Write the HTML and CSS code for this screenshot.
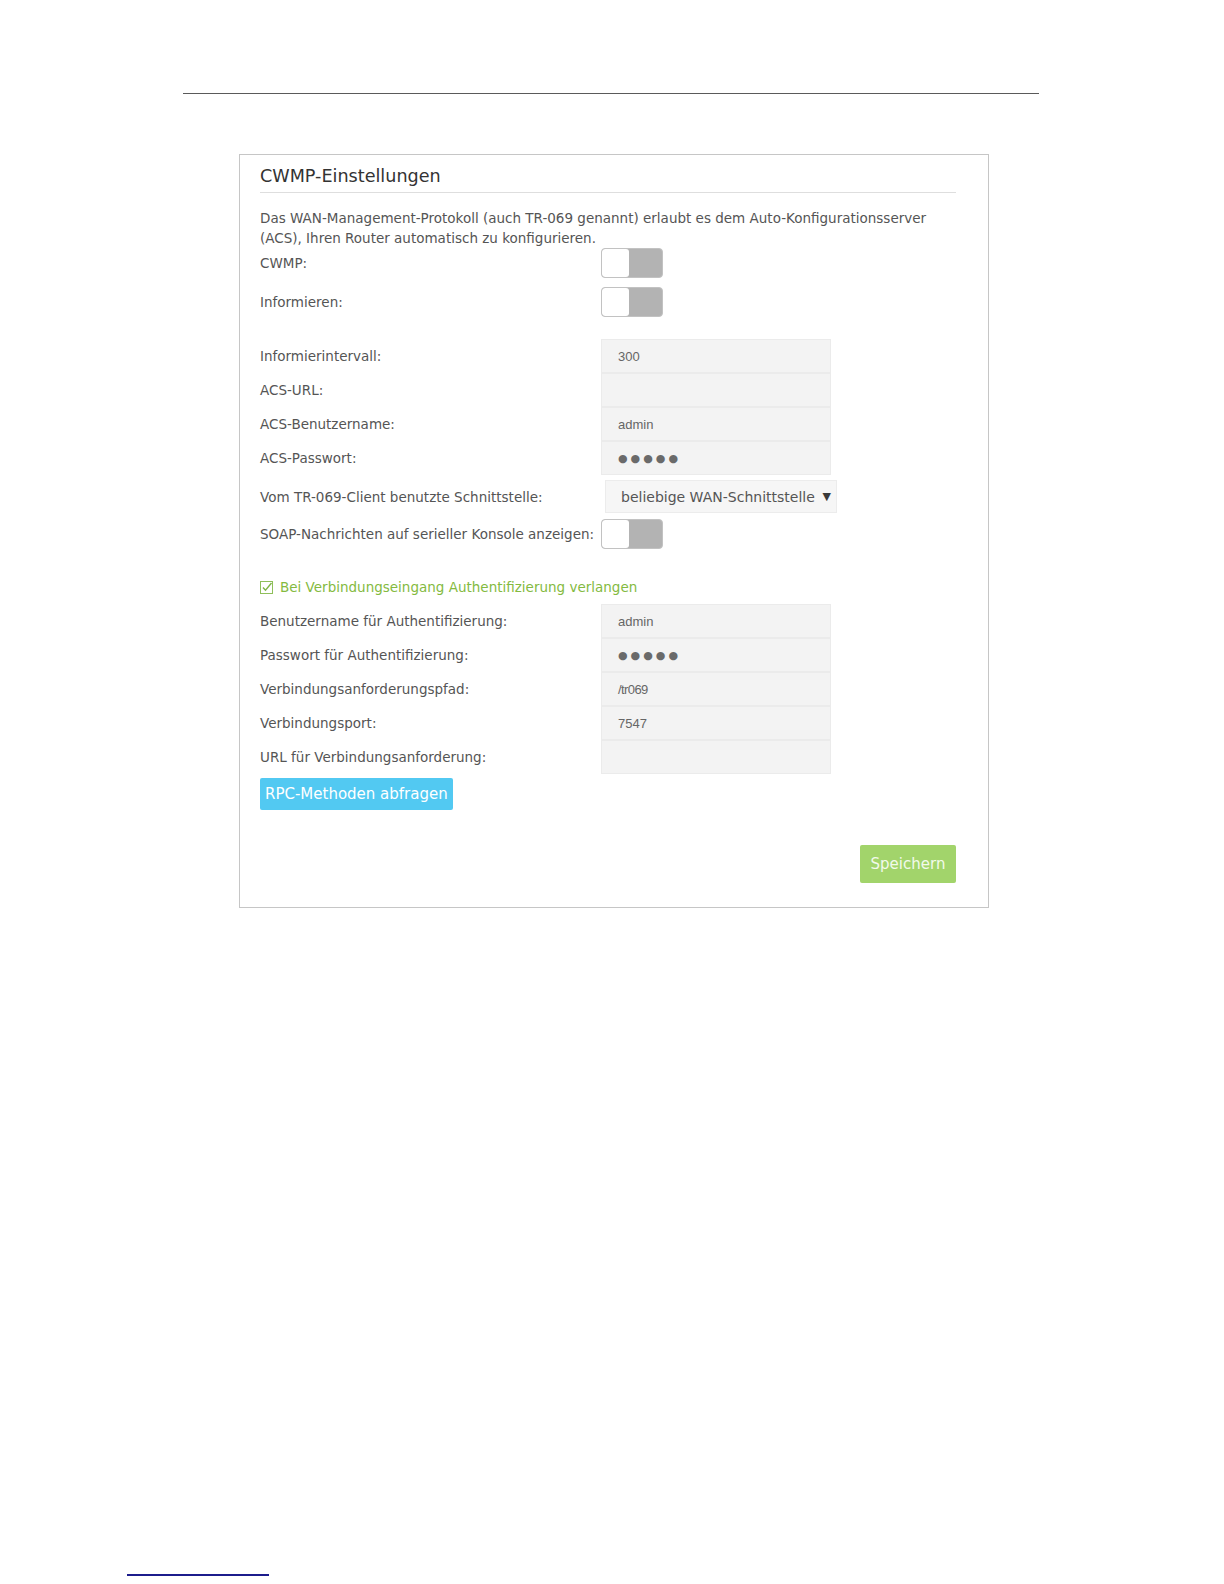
FILE: index.html
```html
<!DOCTYPE html>
<html lang="de">
<head>
<meta charset="utf-8">
<title>CWMP-Einstellungen</title>
<link rel="stylesheet" href="styles.css">
</head>
<body>
<div class="page">
  <div class="rule-top"></div>
  <section class="panel">
    <h2 class="title">CWMP-Einstellungen</h2>
    <p class="desc">Das WAN-Management-Protokoll (auch TR-069 genannt) erlaubt es dem Auto-Konfigurationsserver<br>(ACS), Ihren Router automatisch zu konfigurieren.</p>

    <div class="row row-toggle">
      <span class="label">CWMP:</span>
      <span class="toggle"><span class="knob"></span></span>
    </div>
    <div class="row row-toggle second">
      <span class="label">Informieren:</span>
      <span class="toggle"><span class="knob"></span></span>
    </div>

    <div class="fields first-group">
      <div class="row row-field"><span class="label">Informierintervall:</span><span class="field">300</span></div>
      <div class="row row-field"><span class="label">ACS-URL:</span><span class="field"></span></div>
      <div class="row row-field"><span class="label">ACS-Benutzername:</span><span class="field">admin</span></div>
      <div class="row row-field"><span class="label">ACS-Passwort:</span><span class="field pw">●●●●●</span></div>
    </div>

    <div class="row row-select">
      <span class="label">Vom TR-069-Client benutzte Schnittstelle:</span>
      <span class="select"><span class="select-text">beliebige WAN-Schnittstelle</span><span class="caret">▼</span></span>
    </div>
    <div class="row row-toggle soap">
      <span class="label">SOAP-Nachrichten auf serieller Konsole anzeigen:</span>
      <span class="toggle"><span class="knob"></span></span>
    </div>

    <div class="check-row">
      <svg class="checkbox" width="13" height="13" viewBox="0 0 13 13" aria-hidden="true">
        <rect x="0.5" y="0.5" width="12" height="12" fill="none" stroke="#8fbf5a" stroke-width="1"/>
        <path d="M3 6.5 L5.5 9.2 L11.5 2" fill="none" stroke="#7fb446" stroke-width="1.4"/>
      </svg>
      <span class="check-label">Bei Verbindungseingang Authentifizierung verlangen</span>
    </div>

    <div class="fields second-group">
      <div class="row row-field"><span class="label">Benutzername für Authentifizierung:</span><span class="field">admin</span></div>
      <div class="row row-field"><span class="label">Passwort für Authentifizierung:</span><span class="field pw">●●●●●</span></div>
      <div class="row row-field"><span class="label">Verbindungsanforderungspfad:</span><span class="field narrow">/tr069</span></div>
      <div class="row row-field"><span class="label">Verbindungsport:</span><span class="field">7547</span></div>
      <div class="row row-field"><span class="label">URL für Verbindungsanforderung:</span><span class="field"></span></div>
    </div>

    <button class="btn-rpc" type="button">RPC-Methoden abfragen</button>

    <div class="actions">
      <button class="btn-save" type="button">Speichern</button>
    </div>
  </section>
  <div class="rule-bottom"></div>
</div>
</body>
</html>
```
FILE: styles.css
```css
html, body {
  margin: 0;
  padding: 0;
  background: #ffffff;
}

.page {
  width: 1224px;
  height: 1584px;
  overflow: hidden;
  font-family: "DejaVu Sans", Verdana, sans-serif;
  color: #555555;
}

.rule-top {
  margin: 93px 0 0 183px;
  width: 856px;
  height: 1px;
  background: #5a5a5a;
}

.panel {
  box-sizing: border-box;
  margin: 60px 0 0 239px;
  width: 750px;
  height: 754px;
  border: 1px solid #c6c6c6;
  padding: 0 32px 0 20px;
}

.title {
  margin: 0;
  padding: 10px 0 5px;
  font-size: 17.6px;
  font-weight: normal;
  line-height: 22px;
  color: #333333;
  border-bottom: 1px solid #dedede;
}

.desc {
  margin: 15px 0 0;
  font-size: 13.5px;
  line-height: 20px;
  color: #555555;
}

.row {
  display: flex;
  align-items: center;
}

.label {
  width: 341px;
  flex: none;
  font-size: 13.5px;
  color: #555555;
}

.row-toggle {
  height: 30px;
}

.row-toggle.second {
  margin-top: 9px;
}

.toggle {
  box-sizing: border-box;
  display: flex;
  width: 62px;
  height: 30px;
  border: 1px solid #c2c2c2;
  border-radius: 4px;
  background: #b3b3b3;
  overflow: hidden;
}

.knob {
  width: 27px;
  height: 100%;
  background: #ffffff;
  border-radius: 3px;
}

.fields.first-group {
  margin-top: 22px;
}

.row-field {
  height: 34px;
}

.field {
  box-sizing: border-box;
  display: flex;
  align-items: center;
  width: 230px;
  height: 34px;
  padding-left: 16px;
  background: #f3f3f3;
  border: 1px solid #ebebeb;
  font-family: "Liberation Sans", Arial, sans-serif;
  font-size: 13px;
  color: #666666;
}

.field.narrow {
  letter-spacing: -0.6px;
}

.field.pw {
  font-family: "DejaVu Sans", sans-serif;
  font-size: 11px;
  letter-spacing: 3px;
  color: #6a6a6a;
}

.row-select {
  height: 33px;
  margin-top: 5px;
}

.select {
  box-sizing: border-box;
  display: flex;
  align-items: center;
  justify-content: space-between;
  width: 232px;
  height: 33px;
  margin-left: 4px;
  padding: 0 5px 0 15px;
  background: #f6f6f6;
  border: 1px solid #ececec;
  font-size: 14px;
  color: #555555;
}

.caret {
  font-size: 11px;
  color: #3a3a3a;
}

.row-toggle.soap {
  margin-top: 6px;
}

.check-row {
  display: flex;
  align-items: center;
  gap: 7px;
  height: 20px;
  margin-top: 28px;
}

.checkbox {
  flex: none;
}

.check-label {
  font-size: 13.5px;
  color: #84ba3f;
}

.fields.second-group {
  margin-top: 7px;
}

.btn-rpc {
  display: block;
  margin-top: 4px;
  height: 32px;
  padding: 0 5px;
  border: none;
  border-radius: 2px;
  background: #52c9f2;
  color: #ffffff;
  font-family: "DejaVu Sans", Verdana, sans-serif;
  font-size: 15px;
  cursor: pointer;
}

.actions {
  display: flex;
  justify-content: flex-end;
  margin-top: 35px;
}

.btn-save {
  width: 96px;
  height: 38px;
  border: none;
  border-radius: 2px;
  background: #a2d46b;
  color: #f2faea;
  font-family: "DejaVu Sans", Verdana, sans-serif;
  font-size: 15px;
  cursor: pointer;
}

.rule-bottom {
  margin: 666px 0 0 127px;
  width: 142px;
  height: 2px;
  background: #1c1c8c;
}
```
